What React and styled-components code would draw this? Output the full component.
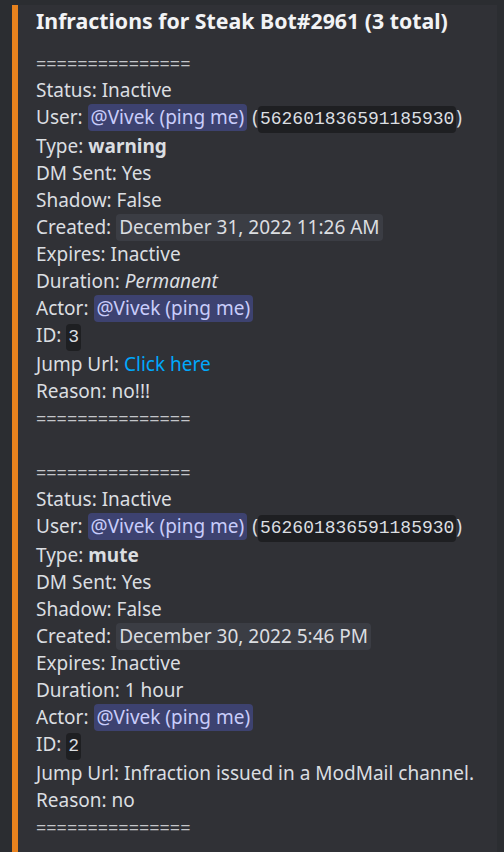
import React from "react"
import styled, { createGlobalStyle } from "styled-components"

const GlobalStyle = createGlobalStyle`
  html, body {
    margin: 0;
    padding: 0;
    background: #2b2d31;
  }
  body {
    font-family: "Noto Sans", "Open Sans", sans-serif;
  }
`

const infractions = [
  {
    type: "warning",
    created: "December 31, 2022 11:26 AM",
    duration: <em>Permanent</em>,
    id: "3",
    jump: <Link>Click here</Link>,
    reason: "no!!!",
  },
  {
    type: "mute",
    created: "December 30, 2022 5:46 PM",
    duration: "1 hour",
    id: "2",
    jump: "Infraction issued in a ModMail channel.",
    reason: "no",
  },
]

const SEP = "==============="

const App = () => (
  <>
    <GlobalStyle />
    <Page>
      <Embed>
        <Title>Infractions for Steak Bot#2961 (3 total)</Title>
        <Description>
          {infractions.map((inf, i) => (
            <Block key={inf.id}>
              {i > 0 && <Line>&nbsp;</Line>}
              <Separator>{SEP}</Separator>
              <Line>Status: Inactive</Line>
              <Line>
                User: <Mention>@Vivek (ping me)</Mention> (
                <Code>562601836591185930</Code>)
              </Line>
              <Line>
                Type: <strong>{inf.type}</strong>
              </Line>
              <Line>DM Sent: Yes</Line>
              <Line>Shadow: False</Line>
              <Line>
                Created: <Stamp>{inf.created}</Stamp>
              </Line>
              <Line>Expires: Inactive</Line>
              <Line>Duration: {inf.duration}</Line>
              <Line>
                Actor: <Mention>@Vivek (ping me)</Mention>
              </Line>
              <Line>
                ID: <Code>{inf.id}</Code>
              </Line>
              <Line>Jump Url: {inf.jump}</Line>
              <Line>Reason: {inf.reason}</Line>
              <Separator>{SEP}</Separator>
            </Block>
          ))}
        </Description>
      </Embed>
    </Page>
  </>
)

const Page = styled.div`
  padding: 5px 7px 0 12px;
  min-height: 852px;
  box-sizing: border-box;
`

const Embed = styled.div`
  background: #303136;
  border-left: 6px solid #e8821e;
  padding: 3px 16px 40px 18px;
  min-height: 847px;
  box-sizing: border-box;
`

const Title = styled.div`
  color: #f2f3f5;
  font-weight: 700;
  font-size: 21.3px;
  line-height: 26px;
  margin-bottom: 16px;
`

const Description = styled.div`
  color: #dbdee1;
  font-size: 19px;
`

const Block = styled.div``

const Line = styled.div`
  line-height: 27px;
  white-space: nowrap;
  strong {
    font-weight: 700;
  }
`

const Separator = styled(Line)`
  font-size: 18px;
  color: #c4c6ca;
`

const Mention = styled.span`
  display: inline-block;
  background: #3d4270;
  color: #c9cdfb;
  border-radius: 4px;
  padding: 1px 3px;
  line-height: 25px;
`

const Code = styled.span`
  display: inline-block;
  background: #1e1f22;
  color: #dbdee1;
  border-radius: 4px;
  padding: 1px 2px;
  line-height: 25px;
  font-family: "Liberation Mono", "DejaVu Sans Mono", monospace;
  font-size: 18px;
`

const Stamp = styled.span`
  display: inline-block;
  background: #3b3d44;
  border-radius: 4px;
  padding: 1px 3px;
  line-height: 25px;
`

function Link({ children }) {
  return <LinkText>{children}</LinkText>
}

const LinkText = styled.span`
  color: #00a8fc;
`

export default App
